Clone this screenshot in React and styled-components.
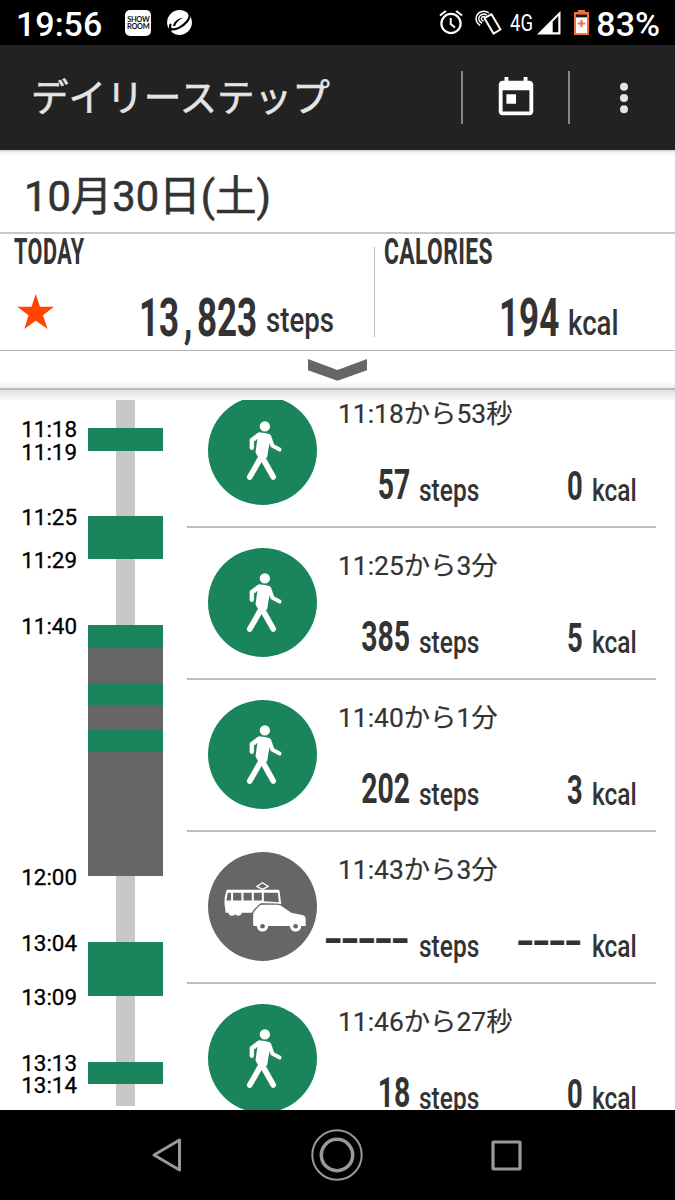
import styled, { createGlobalStyle, ThemeProvider } from "styled-components";

const theme = {
  green: "#1a845c",
  grey: "#666666",
  track: "#c8c8c8",
  line: "#bcbcbc",
  text: "#333333",
};

const GlobalStyle = createGlobalStyle`
  * {
    box-sizing: border-box;
    margin: 0;
    padding: 0;
  }

  body {
    background-color: #fff;
    font-family: Roboto, "Noto Sans CJK JP", sans-serif;
  }

  svg {
    display: block;
    flex-shrink: 0;
  }
`;

const Container = styled.div`
  display: flex;
  flex-direction: column;
  width: 675px;
  height: 1200px;
  overflow: hidden;
  background-color: #fff;
  color: ${(props) => props.theme.text};
`;

/* squeezes the glyphs sideways, anchored on one side */
const Narrow = styled.span`
  display: block;
  white-space: pre;
  font-weight: ${(props) => props.$weight || 700};
  font-size: ${(props) => props.$size}px;
  line-height: ${(props) => props.$size}px;
  letter-spacing: ${(props) => props.$spacing || 0}px;
  transform: scaleX(${(props) => props.$scale});
  transform-origin: ${(props) => props.$origin || "left"} center;
`;

const Dashes = styled(Narrow)`
  margin-right: 3px;
  line-height: ${(props) => props.$line}px;
`;

const StatusBar = styled.div`
  display: flex;
  justify-content: space-between;
  height: 45px;
  padding: 0 15px 0 16px;
  background-color: #000;
  color: #fff;

  .side {
    display: flex;
    align-items: center;
    height: 45px;
  }

  .big {
    font-size: 34px;
    line-height: 40px;
    font-weight: 500;
    padding-top: 3px;
  }
`;

const AppBadge = styled.div`
  display: flex;
  flex-direction: column;
  justify-content: center;
  align-items: center;
  width: 26px;
  height: 26px;
  margin: 0 15px 0 23px;
  border-radius: 5px;
  background-color: #fff;
  color: #111;
  font-family: Lato, sans-serif;
  font-weight: 700;
  font-size: 7.4px;
  line-height: 7px;
  letter-spacing: -0.3px;
`;

const Network = styled.div`
  width: 27px;
  margin-left: 8px;
`;

const Header = styled.div`
  display: flex;
  align-items: center;
  height: 105px;
  background-color: #222;

  h1 {
    flex: 1;
    padding-left: 31px;
    color: #e4e4e4;
    font-size: 37.6px;
    font-weight: 400;
    line-height: 50px;
    -webkit-text-stroke: 0.6px #e4e4e4;
  }
`;

const HeaderButton = styled.div`
  display: flex;
  align-items: center;
  justify-content: center;
  width: 107px;
  height: 53px;
  border-left: 2px solid #858585;
`;

const DateBar = styled.div`
  height: 84px;
  padding: 17px 0 0 24px;
  border-bottom: 2px solid #c8c8c8;
  background: linear-gradient(#d2d2d2, #f7f7f7 3px, #fff 7px);
  font-size: 41.6px;
  line-height: 60px;
  font-weight: 400;
  -webkit-text-stroke: 0.6px ${(props) => props.theme.text};
`;

const Summary = styled.div`
  display: flex;
  align-items: flex-start;
  height: 117px;
  border-bottom: 1px solid #b4b4b4;
`;

const Stat = styled.div`
  width: ${(props) => props.$width}px;
  height: 103px;
  padding-left: ${(props) => props.$pad}px;

  .amount {
    display: flex;
    align-items: flex-start;
    justify-content: space-between;
    margin-top: 22px;
  }

  .value {
    display: flex;
  }

  .comma {
    padding: 0 7px;
  }
`;

const Divider = styled.div`
  width: 1px;
  height: 90px;
  margin-top: 13px;
  background-color: #bbb;
`;

const PullBar = styled.div`
  display: flex;
  justify-content: center;
  height: 39px;
  padding-top: 8px;
  border-bottom: 2px solid #b9b9b9;
  background: linear-gradient(#fff 30px, #ededed);
`;

const Shade = styled.div`
  height: 10px;
  background: linear-gradient(#e2e2e2, #f8f8f8);
`;

const Body = styled.div`
  display: flex;
  height: 710px;
  overflow: hidden;
`;

const Timeline = styled.div`
  width: 187px;
`;

const Segment = styled.div`
  display: flex;
  align-items: flex-start;
  height: ${(props) => props.$height}px;

  .time {
    width: 77px;
    margin-top: -9px;
    text-align: right;
    color: #000;
    font-size: 22.4px;
    line-height: 21px;
    font-weight: 400;
    -webkit-text-stroke: 0.3px #000;
  }

  .bar {
    width: ${(props) => (props.$kind === "track" ? 19 : 75)}px;
    height: 100%;
    margin-left: ${(props) => (props.$kind === "track" ? 39 : 11)}px;
    background-color: ${(props) => props.theme[props.$kind]};
  }
`;

const List = styled.div`
  width: 469px;
  margin-top: -24px;
`;

const Row = styled.div`
  display: flex;
  height: 152px;
  padding: 20px 0 0 21px;
  border-bottom: 2px solid ${(props) => props.theme.line};
`;

const Details = styled.div`
  margin-left: 21px;

  .title {
    padding-top: 1px;
    font-size: 26.4px;
    line-height: 34px;
    font-weight: 400;
    white-space: nowrap;
    -webkit-text-stroke: 0.2px ${(props) => props.theme.text};
  }

  .numbers {
    display: flex;
    margin-top: 32px;
  }
`;

const Cell = styled.div`
  display: flex;
  flex-shrink: 0;
  justify-content: ${(props) => (props.$unit ? "flex-start" : "flex-end")};
  width: ${(props) => props.$width}px;
  padding-top: ${(props) => props.$top || 0}px;
  padding-left: ${(props) => (props.$unit ? 9 : 0)}px;
`;

const NavBar = styled.div`
  display: flex;
  align-items: center;
  justify-content: space-between;
  height: 90px;
  padding: 0 153px 0 151px;
  background-color: #000;
`;

const segments = [
  { height: 28, kind: "track" },
  { height: 22.5, kind: "green", time: "11:18" },
  { height: 65.5, kind: "track", time: "11:19" },
  { height: 43, kind: "green", time: "11:25" },
  { height: 66, kind: "track", time: "11:29" },
  { height: 22.5, kind: "green", time: "11:40" },
  { height: 35.5, kind: "grey" },
  { height: 22, kind: "green" },
  { height: 25, kind: "grey" },
  { height: 22, kind: "green" },
  { height: 124, kind: "grey" },
  { height: 66, kind: "track", time: "12:00" },
  { height: 54, kind: "green", time: "13:04" },
  { height: 66, kind: "track", time: "13:09" },
  { height: 22, kind: "green", time: "13:13" },
  { height: 22, kind: "track", time: "13:14" },
];

const activities = [
  { title: "11:18から53秒", steps: "57", kcal: "0" },
  { title: "11:25から3分", steps: "385", kcal: "5" },
  { title: "11:40から1分", steps: "202", kcal: "3" },
  { title: "11:43から3分", ride: true },
  { title: "11:46から27秒", steps: "18", kcal: "0" },
];

const SwirlIcon = () => (
  <svg width="27" height="27" viewBox="0 0 27 27">
    <circle cx="13.5" cy="13.5" r="12.4" fill="#fff" />
    <path
      d="M5 15C3.500 17 3.500 19 5.500 20C9 21.500 16.500 18 21 12.500C23.500 9 24.500 5.500 22.500 4"
      fill="none"
      stroke="#000"
      strokeWidth="2.200"
    />
    <path d="M0 22.500L3 18.500L6 21.500L4 25Z" fill="#000" />
    <path d="M7 17C7.500 13 12 9.200 17.500 8.500C13.500 10.500 10.500 13 9 17" fill="#000" />
  </svg>
);

const AlarmIcon = () => (
  <svg width="24" height="25" viewBox="0 0 24 25" fill="none" stroke="#fff">
    <circle cx="12" cy="13.500" r="9.600" strokeWidth="2.200" />
    <path d="M11.700 8V14L16 17.500" strokeWidth="2" />
    <path d="M1 5.500L6.800 1M23 5.500L17.200 1" strokeWidth="2.200" />
  </svg>
);

const TapIcon = () => (
  <svg width="27" height="26" viewBox="0 0 27 26" fill="none" stroke="#fff">
    <path d="M9.500 8.200L16.500 4.200L25.500 19.500L18.500 23.600Z" strokeWidth="2" strokeLinejoin="round" />
    <path d="M5.200 15.500C1.500 13.500 0 9 2 5.200C4.300 1 10 .2 14 3" strokeWidth="1.500" />
    <path d="M7 13C4 12 3 9 4.300 6.500C5.700 4 9 3.400 11.800 5" strokeWidth="1.500" />
    <path d="M8.600 11C6.500 10.500 5.900 8.800 6.700 7.500C7.300 6.500 8.500 6.200 9.800 6.700" strokeWidth="1.400" />
  </svg>
);

const SignalIcon = () => (
  <svg width="24" height="24" viewBox="0 0 24 24">
    <path d="M0 23.500L23.500 0V23.500Z" fill="#fff" />
    <path d="M15.700 10.700L21.300 5V21.300H15.700Z" fill="#000" />
  </svg>
);

const BatteryIcon = () => (
  <svg width="15" height="25" viewBox="0 0 15 25">
    <path d="M4 0H11V2H15V25H0V2H4Z" fill="#f2703e" />
    <path d="M2 4.500H13V7.500H2Z" fill="#201510" />
    <path d="M2 7.500H13V23H2Z" fill="#fff" />
    <path d="M6.500 9.800H8.500V12.500H11.300V14.500H8.500V17.300H6.500V14.500H3.700V12.500H6.500Z" fill="#f2703e" />
  </svg>
);

const WalkIcon = () => (
  <svg width="109" height="109" viewBox="55 5 326 326">
    <circle cx="218" cy="168" r="163" fill={theme.green} />
    <circle cx="225" cy="96" r="15.500" fill="#fff" />
    <path
      d="M207 114Q224 113 238 119Q244 124 241 140L236 163L232 188L222 194L204 187L197 173L203 132L195 140L180 134Z"
      fill="#fff"
    />
    <g fill="none" stroke="#fff" strokeLinecap="round" strokeLinejoin="round">
      <path d="M207 121L186 137V160" strokeWidth="13" />
      <path d="M238 126L248 154L269 165" strokeWidth="12" />
      <path d="M215 186L180 247" strokeWidth="17" />
      <path d="M216 186L250 247" strokeWidth="17" />
    </g>
  </svg>
);

const RideIcon = () => (
  <svg width="109" height="109" viewBox="55 37 326 326">
    <circle cx="218" cy="200" r="163" fill={theme.grey} />
    <path d="M201 140L218 129L235 140L218 149Z" fill="none" stroke="#fff" strokeWidth="4" />
    <path
      d="M114 150H264Q268 150 269 154L274 193L214 190L186 219H156Q154 228 146 228Q140 228 137 223Q133 228 125 228Q118 228 116 219H108L104 190Q104 170 110 153Q111 150 114 150Z"
      fill="#fff"
    />
    <path
      d="M114 159H124V182H110ZM130 159H155V182H130ZM161 159H186V182H161ZM192 159H216V182H192ZM222 159H264L267 187L222 184Z"
      fill={theme.grey}
    />
    <path
      d="M190 223Q191 216 196 211L209 198Q212 195 217 195H262Q272 195 280 202L304 219L340 226Q347 228 347 236V258H334A17 17 0 0 1 300 258H235A17 17 0 0 1 201 258H193Q190 258 190 254Z"
      fill="#fff"
      stroke={theme.grey}
      strokeWidth="8"
      paintOrder="stroke"
    />
    <circle cx="218" cy="259" r="15" fill="#fff" />
    <circle cx="317" cy="259" r="15" fill="#fff" />
    <circle cx="218" cy="259" r="7" fill={theme.grey} />
    <circle cx="317" cy="259" r="7" fill={theme.grey} />
  </svg>
);

const Activity = ({ title, steps, kcal, ride }) => (
  <Row>
    {ride ? <RideIcon /> : <WalkIcon />}
    <Details>
      <p className="title">{title}</p>
      <div className="numbers">
        <Cell $width={72}>
          {ride ? (
            <Dashes $size={43} $line={40} $scale={1.22} $spacing={-3.2} $origin="right">-----</Dashes>
          ) : (
            <Narrow $size={43} $scale={0.66} $origin="right">{steps}</Narrow>
          )}
        </Cell>
        <Cell $unit $width={90} $top={12}>
          <Narrow $size={31} $scale={0.79} $weight={500}>steps</Narrow>
        </Cell>
        <Cell $width={83} $top={1.5}>
          {ride ? (
            <Dashes $size={41} $line={40} $scale={1.22} $spacing={-3} $origin="right">----</Dashes>
          ) : (
            <Narrow $size={41.5} $scale={0.66} $origin="right">{kcal}</Narrow>
          )}
        </Cell>
        <Cell $unit $width={60} $top={12}>
          <Narrow $size={31} $scale={0.79} $weight={500}>kcal</Narrow>
        </Cell>
      </div>
    </Details>
  </Row>
);

const App = () => {
  return (
    <ThemeProvider theme={theme}>
      <GlobalStyle />
      <Container>
        <StatusBar>
          <div className="side">
            <span className="big">19:56</span>
            <AppBadge>
              <span>SHOW</span>
              <span>ROOM</span>
            </AppBadge>
            <SwirlIcon />
          </div>
          <div className="side">
            <AlarmIcon />
            <div style={{ width: 12 }} />
            <TapIcon />
            <Network>
              <Narrow $size={24} $scale={0.77} $weight={400}>4G</Narrow>
            </Network>
            <SignalIcon />
            <div style={{ width: 13 }} />
            <BatteryIcon />
            <span className="big" style={{ paddingLeft: 7 }}>83%</span>
          </div>
        </StatusBar>
        <Header>
          <h1>デイリーステップ</h1>
          <HeaderButton>
            <svg width="46" height="46" viewBox="0 0 24 24" fill="#fff">
              <path d="M19 3h-1V1h-2v2H8V1H6v2H5c-1.100 0-2 .9-2 2v14c0 1.100.9 2 2 2h14c1.100 0 2-.9 2-2V5c0-1.100-.9-2-2-2zm0 16H5V8h14v11zM7 10h5v5H7z" />
            </svg>
          </HeaderButton>
          <HeaderButton>
            <svg width="13" height="32" viewBox="0 0 13 32" fill="#e4e4e4">
              <circle cx="8" cy="4.800" r="4" />
              <circle cx="8" cy="16" r="4" />
              <circle cx="8" cy="27.200" r="4" />
            </svg>
          </HeaderButton>
        </Header>
        <DateBar>10月30日(土)</DateBar>
        <Summary>
          <Stat $width={374} $pad={14}>
            <Narrow $size={36} $scale={0.6} $spacing={0.8}>TODAY</Narrow>
            <div className="amount">
              <svg width="44" height="40" viewBox="14 292 44 40" fill="#ff4500">
                <path d="M35.700 294L40 306.700H54L43 315.200L47.500 329L35.700 320.700L24.300 329L28.500 315.200L17.300 306.700H31.500Z" />
              </svg>
              <div className="value">
                <Narrow $size={53} $scale={0.66} $origin="right">
                  13<span className="comma">,</span>823
                </Narrow>
                <Cell $unit $width={117} $top={11}>
                  <Narrow $size={35} $scale={0.79} $weight={500}>steps</Narrow>
                </Cell>
              </div>
            </div>
          </Stat>
          <Divider />
          <Stat $width={300} $pad={9}>
            <Narrow $size={36} $scale={0.635} $spacing={0.6}>CALORIES</Narrow>
            <div className="amount">
              <div />
              <div className="value">
                <Narrow $size={53} $scale={0.66} $origin="right">194</Narrow>
                <Cell $unit $width={116} $top={14}>
                  <Narrow $size={35} $scale={0.79} $weight={500}>kcal</Narrow>
                </Cell>
              </div>
            </div>
          </Stat>
        </Summary>
        <PullBar>
          <svg width="59" height="22" viewBox="0 0 59 22" fill={theme.grey}>
            <path d="M0 0L29.500 11L59 0V11.300L29.500 21.800L0 11.300Z" />
          </svg>
        </PullBar>
        <Shade />
        <Body>
          <Timeline>
            {segments.map((item, index) => (
              <Segment key={index} $height={item.height} $kind={item.kind}>
                <span className="time">{item.time}</span>
                <div className="bar" />
              </Segment>
            ))}
          </Timeline>
          <List>
            {activities.map((item) => (
              <Activity key={item.title} {...item} />
            ))}
          </List>
        </Body>
        <NavBar>
          <svg width="32" height="36" viewBox="0 0 32 36" fill="none" stroke="#999" strokeWidth="3">
            <path d="M3 18L28.500 3V33Z" strokeLinejoin="round" />
          </svg>
          <svg width="52" height="52" viewBox="0 0 52 52" fill="none" stroke="#999">
            <circle cx="26" cy="26" r="24.700" strokeWidth="2" />
            <circle cx="26" cy="26" r="15.700" strokeWidth="3.500" />
          </svg>
          <svg width="31" height="31" viewBox="0 0 31 31" fill="none" stroke="#999" strokeWidth="3.200">
            <rect x="2" y="2" width="27" height="27" rx="0.500" />
          </svg>
        </NavBar>
      </Container>
    </ThemeProvider>
  );
};

export default App;
